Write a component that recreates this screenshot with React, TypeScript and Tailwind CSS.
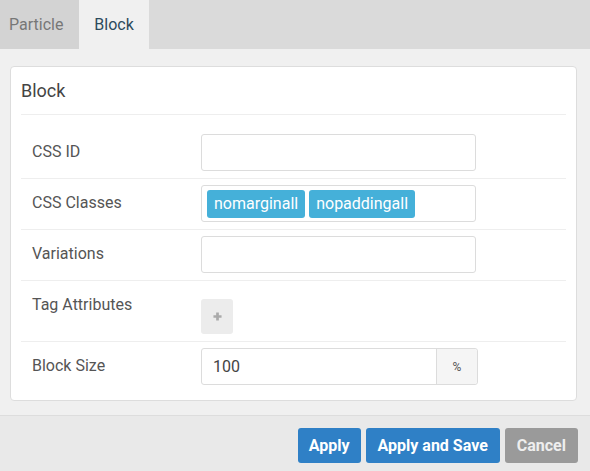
import React from 'react'

const font = { fontFamily: 'Roboto, "Noto Sans", sans-serif' }

function Row({ label, children, last }: { label: string; children: React.ReactNode; last?: boolean }) {
  return (
    <div className={`flex pl-[11px] ${last ? '' : 'border-b border-[#eeeeee]'}`}>
      <div className="w-[169px] shrink-0 pt-[14px] text-[16px] leading-[19px] text-[#555]">{label}</div>
      <div className="pt-[6px] pb-[7px]">{children}</div>
    </div>
  )
}

function TextInput({ value }: { value?: string }) {
  return (
    <div className="h-[37px] w-[275px] rounded-[3px] border border-[#dcdcdc] bg-white px-[11px] text-[16px] leading-[35px] text-[#444]">
      {value}
    </div>
  )
}

export default function App() {
  const tags = ['nomarginall', 'nopaddingall']

  return (
    <div className="flex h-[471px] w-[590px] flex-col bg-[#f0f0f0]" style={font}>
      {/* tabs */}
      <div className="flex h-[49px] shrink-0 bg-[#dadada]">
        <div className="flex w-[79px] items-center pl-[9px] bg-[#d3d3d3] text-[16px] text-[#777]">Particle</div>
        <div className="flex w-[70px] items-center justify-center bg-[#f0f0f0] text-[16px] text-[#2c4a5c]">Block</div>
      </div>

      {/* card */}
      <div className="flex-1 pl-[10px] pr-[13px] pt-[17px]">
        <div className="rounded-[4px] border border-[#dddddd] bg-white px-[10px] pb-[8px]">
          <div className="border-b border-[#eeeeee] pt-[12px] pb-[12px] text-[18px] leading-[23px] text-[#444]">
            Block
          </div>
          <div className="pt-[13px]">
            <Row label="CSS ID">
              <TextInput />
            </Row>
            <Row label="CSS Classes">
              <div className="flex h-[37px] w-[275px] items-center gap-[4px] rounded-[3px] border border-[#dcdcdc] bg-white px-[5px]">
                {tags.map((t) => (
                  <span key={t} className="flex h-[28px] items-center rounded-[3px] bg-[#45b0d9] px-[7px] text-[16px] text-white">
                    {t}
                  </span>
                ))}
              </div>
            </Row>
            <Row label="Variations">
              <TextInput />
            </Row>
            <Row label="Tag Attributes">
              <div className="pt-[12px]">
                <div className="flex h-[35px] w-[32px] items-center justify-center rounded-[3px] bg-[#ececec]">
                  <svg width="9" height="9" viewBox="0 0 10 10">
                    <path d="M5 0.5v9M0.5 5h9" stroke="#aaaaaa" strokeWidth="3" />
                  </svg>
                </div>
              </div>
            </Row>
            <Row label="Block Size" last>
              <div className="flex h-[37px] w-[277px] rounded-[3px] border border-[#dcdcdc] bg-white">
                <div className="flex-1 px-[11px] text-[16px] leading-[35px] text-[#444]">100</div>
                <div className="flex w-[41px] items-center justify-center rounded-r-[3px] border-l border-[#dcdcdc] bg-[#f5f5f5] text-[12px] text-[#555]">
                  %
                </div>
              </div>
            </Row>
          </div>
        </div>
      </div>

      {/* footer */}
      <div className="flex h-[56px] shrink-0 items-center justify-end gap-[5px] border-t border-[#dddddd] bg-[#e9e9e9] pr-[12px] pt-[4px]">
        <button className="h-[35px] rounded-[3px] bg-[#2f80c6] px-[11px] text-[16px] font-bold text-white">Apply</button>
        <button className="h-[35px] rounded-[3px] bg-[#2f80c6] px-[12px] text-[16px] font-bold text-white">Apply and Save</button>
        <button className="h-[35px] rounded-[3px] bg-[#9a9a9a] px-[12px] text-[16px] font-bold text-[#eeeeee]">Cancel</button>
      </div>
    </div>
  )
}
